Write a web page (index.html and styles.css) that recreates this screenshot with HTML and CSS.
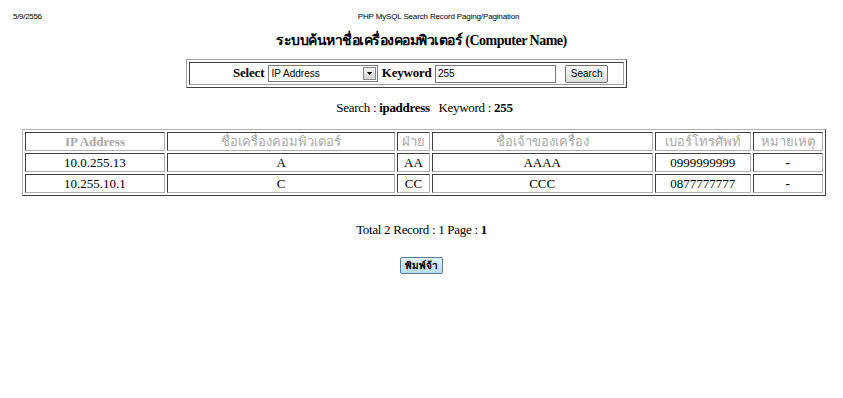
FILE: index.html
```html
<!DOCTYPE html>
<html>
<head>
<meta charset="utf-8">
<link rel="stylesheet" href="styles.css">
</head>
<body>
<div class="printhead">
  <span class="date">5/9/2556</span>
  <span class="ptitle">PHP MySQL Search Record Paging/Pagination</span>
</div>
<h1 class="title">ระบบค้นหาชื่อเครื่องคอมพิวเตอร์ (Computer Name)</h1>
<table class="formtbl">
  <tr>
    <td class="formcell">
      <span class="lbl">Select</span>
      <span class="sel"><span class="seltext">IP Address</span><span class="arrow"><svg width="9" height="9" viewBox="0 0 9 9"><path d="M2 3h5L4.5 6z" fill="#000"/></svg></span></span>
      <span class="lbl">Keyword</span>
      <span class="inp">255</span>
      <span class="btn">Search</span>
    </td>
  </tr>
</table>
<div class="summary">Search : <b>ipaddress</b> &nbsp;&nbsp;Keyword : <b>255</b></div>
<table class="data">
  <tr class="head">
    <th class="c1 en">IP Address</th>
    <th class="c2">ชื่อเครื่องคอมพิวเตอร์</th>
    <th class="c3">ฝ่าย</th>
    <th class="c4">ชื่อเจ้าของเครื่อง</th>
    <th class="c5">เบอร์โทรศัพท์</th>
    <th class="c6">หมายเหตุ</th>
  </tr>
  <tr>
    <td>10.0.255.13</td><td>A</td><td>AA</td><td>AAAA</td><td>0999999999</td><td><b>-</b></td>
  </tr>
  <tr>
    <td>10.255.10.1</td><td>C</td><td>CC</td><td>CCC</td><td>0877777777</td><td><b>-</b></td>
  </tr>
</table>
<div class="total">Total 2 Record : 1 Page : <b>1</b></div>
<div class="printrow"><span class="printbtn">พิมพ์จ้า</span></div>
</body>
</html>
```
FILE: styles.css
```css
body {
  margin: 0;
  font-family: "Liberation Serif", "Noto Sans", serif;
  font-size: 13px;
  color: #000;
  background: #fff;
}
.printhead {
  position: relative;
  height: 24px;
  font-family: "Liberation Sans", sans-serif;
  font-size: 8px;
  letter-spacing: -0.15px;
}
.date {
  position: absolute;
  left: 13px;
  top: 12px;
  letter-spacing: -0.3px;
}
.ptitle {
  position: absolute;
  left: 0;
  right: 0;
  top: 12px;
  text-align: center;
  padding-left: 34px;
}
.title {
  margin: 5px 0 0 0;
  text-align: center;
  font-size: 14px;
  font-weight: bold;
  letter-spacing: -0.5px;
  padding-left: 0;
}
.formtbl {
  margin: 8px 0 0 186px;
  width: 441px;
  border-collapse: separate;
  border-spacing: 2px;
  border: 1px solid;
  border-color: #a0a0a0 #404040 #404040 #a0a0a0;
}
.formcell {
  border: 1px solid;
  border-color: #404040 #a0a0a0 #a0a0a0 #404040;
  text-align: left;
  height: 21px;
  padding: 0 0 0 43px;
  white-space: nowrap;
}
.lbl {
  font-weight: bold;
  font-size: 13px;
  vertical-align: middle;
  letter-spacing: -0.2px;
}
.sel {
  display: inline-flex;
  align-items: center;
  justify-content: space-between;
  width: 108px;
  height: 15px;
  border: 1px solid #7a7a7a;
  vertical-align: middle;
  margin: 0 1px 0 0;
  font-family: "Liberation Sans", sans-serif;
  font-size: 10px;
  text-align: left;
  background: #fff;
}
.seltext { padding-left: 3px; }
.arrow {
  width: 11px;
  height: 11px;
  margin-right: 1px;
  border: 1px solid #888;
  background: linear-gradient(#f4f4f4, #d4d4d4);
  display: flex;
  align-items: center;
  justify-content: center;
}
.inp {
  display: inline-block;
  width: 117px;
  height: 16px;
  line-height: 16px;
  border: 1px solid #7a7a7a;
  vertical-align: middle;
  font-family: "Liberation Sans", sans-serif;
  font-size: 10px;
  text-align: left;
  padding-left: 2px;
  margin: 0 6px 0 0;
}
.btn {
  display: inline-block;
  width: 41px;
  height: 16px;
  line-height: 16px;
  border: 1px solid #707070;
  border-radius: 2px;
  background: linear-gradient(#fafafa, #dcdcdc);
  font-family: "Liberation Sans", sans-serif;
  font-size: 10px;
  vertical-align: middle;
  text-align: center;
}
.summary {
  margin-top: 12px;
  text-align: center;
  padding-left: 6px;
  letter-spacing: -0.3px;
}
.data {
  margin: 13px 0 0 22px;
  width: 804px;
  border-collapse: separate;
  border-spacing: 2px;
  border: 1px solid;
  border-color: #b0b0b0 #404040 #404040 #b0b0b0;
}
.data th, .data td {
  border: 1px solid;
  border-color: #404040 #b0b0b0 #b0b0b0 #404040;
  height: 17px;
  line-height: 17px;
  padding: 0;
  text-align: center;
  font-size: 13px;
}
.data th {
  color: #a8a8a8;
  font-weight: normal;
  font-family: "Liberation Sans", "Noto Sans", sans-serif;
}
.data th.en {
  font-family: "Liberation Serif", serif;
  font-weight: bold;
}
.c1 { width: 137px; }
.c2 { width: 225px; }
.c3 { width: 30px; }
.c4 { width: 218px; }
.c5 { width: 93px; }
.c6 { width: 68px; }
.total {
  margin-top: 26px;
  text-align: center;
  letter-spacing: -0.3px;
}
.printrow {
  margin-top: 19px;
  text-align: center;
  padding-left: 0;
}
.printbtn {
  display: inline-block;
  width: 41px;
  height: 15px;
  line-height: 15px;
  border: 1px solid #5a7a9a;
  border-radius: 2px;
  background: linear-gradient(#dff0fb, #b6dcf2);
  font-family: "Liberation Sans", "Noto Sans", sans-serif;
  font-weight: bold;
  font-size: 10px;
}
```
